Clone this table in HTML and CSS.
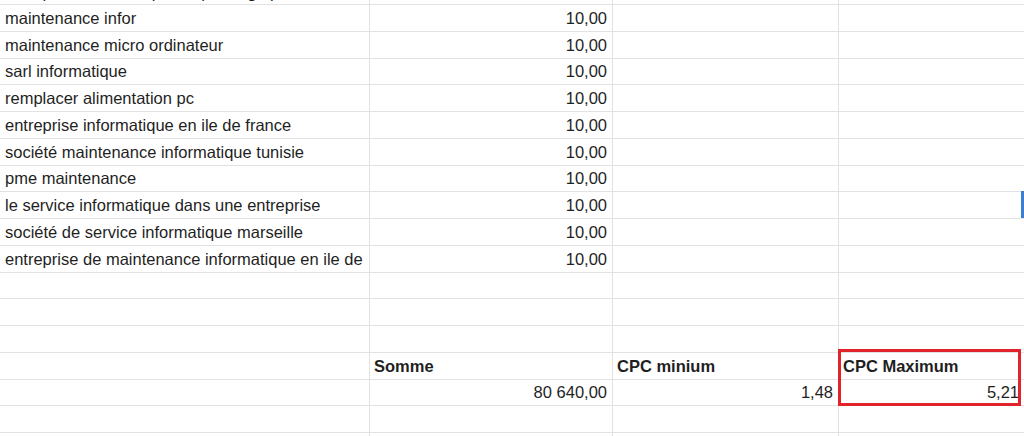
FILE: index.html
```html
<!DOCTYPE html>
<html lang="fr">
<head>
<meta charset="utf-8">
<title>Feuille</title>
<link rel="stylesheet" href="styles.css">
</head>
<body>
<div class="sheet">
  <div class="row row-partial">
    <div class="cell"><span class="clip-text">entreprise informatique, dépannage pc</span></div>
    <div class="cell num"></div>
    <div class="cell"></div>
    <div class="cell"></div>
  </div>
  <div class="row"><div class="cell">maintenance infor</div><div class="cell num">10,00</div><div class="cell"></div><div class="cell"></div></div>
  <div class="row"><div class="cell">maintenance micro ordinateur</div><div class="cell num">10,00</div><div class="cell"></div><div class="cell"></div></div>
  <div class="row"><div class="cell">sarl informatique</div><div class="cell num">10,00</div><div class="cell"></div><div class="cell"></div></div>
  <div class="row"><div class="cell">remplacer alimentation pc</div><div class="cell num">10,00</div><div class="cell"></div><div class="cell"></div></div>
  <div class="row"><div class="cell">entreprise informatique en ile de france</div><div class="cell num">10,00</div><div class="cell"></div><div class="cell"></div></div>
  <div class="row"><div class="cell">société maintenance informatique tunisie</div><div class="cell num">10,00</div><div class="cell"></div><div class="cell"></div></div>
  <div class="row"><div class="cell">pme maintenance</div><div class="cell num">10,00</div><div class="cell"></div><div class="cell"></div></div>
  <div class="row"><div class="cell">le service informatique dans une entreprise</div><div class="cell num">10,00</div><div class="cell"></div><div class="cell"></div></div>
  <div class="row"><div class="cell">société de service informatique marseille</div><div class="cell num">10,00</div><div class="cell"></div><div class="cell"></div></div>
  <div class="row"><div class="cell">entreprise de maintenance informatique en ile de</div><div class="cell num">10,00</div><div class="cell"></div><div class="cell"></div></div>
  <div class="row"><div class="cell"></div><div class="cell"></div><div class="cell"></div><div class="cell"></div></div>
  <div class="row"><div class="cell"></div><div class="cell"></div><div class="cell"></div><div class="cell"></div></div>
  <div class="row"><div class="cell"></div><div class="cell"></div><div class="cell"></div><div class="cell"></div></div>
  <div class="row"><div class="cell"></div><div class="cell bold">Somme</div><div class="cell bold">CPC minium</div><div class="cell bold">CPC Maximum</div></div>
  <div class="row"><div class="cell"></div><div class="cell num">80 640,00</div><div class="cell num">1,48</div><div class="cell num">5,21</div></div>
  <div class="row"><div class="cell"></div><div class="cell"></div><div class="cell"></div><div class="cell"></div></div>
  <div class="row"><div class="cell"></div><div class="cell"></div><div class="cell"></div><div class="cell"></div></div>

  <div class="highlight-box"></div>
  <div class="selection-edge"></div>
</div>
</body>
</html>
```

FILE: styles.css
```css
html, body {
  margin: 0;
  padding: 0;
  background: #ffffff;
  overflow: hidden;
}

.sheet {
  position: relative;
  width: 1024px;
  height: 436px;
  overflow: hidden;
  font-family: "Liberation Sans", Arial, Helvetica, sans-serif;
  font-size: 16.5px;
  color: #1f1f1f;
}

.row {
  display: grid;
  grid-template-columns: 370px 243px 226px 1fr;
  height: 26.75px;
  box-sizing: border-box;
  border-bottom: 1px solid #e2e2e2;
}

.row-partial {
  height: 5px;
  overflow: hidden;
}

.cell {
  box-sizing: border-box;
  border-right: 1px solid #e2e2e2;
  padding: 1px 5px 0 5px;
  display: flex;
  align-items: center;
  white-space: nowrap;
  overflow: hidden;
  min-width: 0;
}

.cell:last-child {
  border-right: none;
}

.num {
  justify-content: flex-end;
}

.bold {
  font-weight: bold;
  padding-left: 4px;
}

.row-partial .cell {
  align-items: flex-end;
  padding-top: 0;
}

.clip-text {
  display: block;
  line-height: 18px;
  transform: translateY(-3px);
}

.highlight-box {
  position: absolute;
  left: 838px;
  top: 349px;
  width: 183px;
  height: 57px;
  box-sizing: border-box;
  border: 3px solid #e1232c;
}

.selection-edge {
  position: absolute;
  left: 1021px;
  top: 191px;
  width: 3px;
  height: 27px;
  background: #3b7fd0;
}
```
